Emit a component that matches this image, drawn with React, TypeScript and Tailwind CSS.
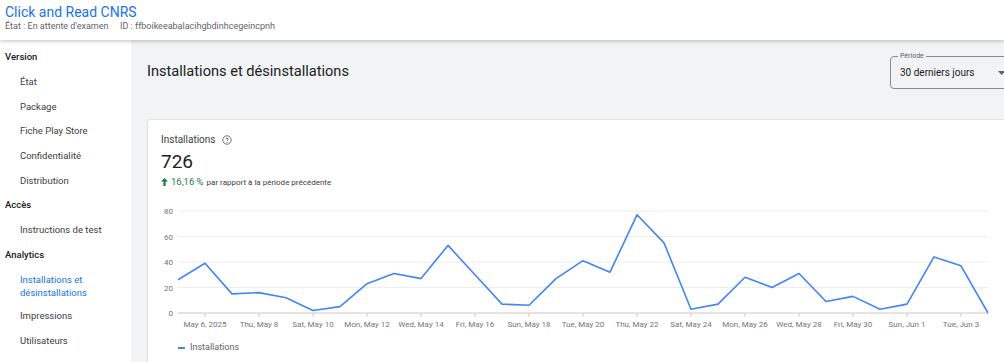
import React from "react";

const values = [26, 39, 15, 16, 12, 2, 5, 23, 31, 27, 53, 30, 7, 6, 27, 41, 32, 77, 55, 3, 7, 28, 20, 31, 9, 13, 3, 7, 44, 37, 0];
const xLabels = ["May 6, 2025", "Thu, May 8", "Sat, May 10", "Mon, May 12", "Wed, May 14", "Fri, May 16", "Sun, May 18", "Tue, May 20", "Thu, May 22", "Sat, May 24", "Mon, May 26", "Wed, May 28", "Fri, May 30", "Sun, Jun 1", "Tue, Jun 3"];

const OX = 148;
const OY = 200;
const x0 = 178 - OX;
const step = 27;
const yZero = 312 - OY;
const pxPerUnit = 1.275;

function Chart() {
  const pts = values.map((v, i) => `${x0 + i * step},${(yZero - v * pxPerUnit).toFixed(1)}`).join(" ");
  const grid = [0, 20, 40, 60, 80];
  const xEnd = 988 - OX;
  return (
    <svg width="860" height="130" className="block" style={{ fontFamily: "Roboto, 'Liberation Sans', sans-serif" }}>
      {grid.map((g) => {
        const y = yZero - g * pxPerUnit;
        return (
          <g key={g}>
            <line x1={x0} x2={xEnd} y1={y} y2={y} stroke={g === 0 ? "#c8c8c8" : "#ededed"} strokeWidth={1} />
            <text x={x0 - 5} y={y + 3} fontSize="8" fill="#757575" textAnchor="end">{g}</text>
          </g>
        );
      })}
      {xLabels.map((l, i) => {
        const x = x0 + (1 + i * 2) * step;
        return (
          <g key={l}>
            <line x1={x} x2={x} y1={yZero} y2={yZero + 4} stroke="#c8c8c8" />
            <text x={x} y={yZero + 14} fontSize="8" fill="#757575" textAnchor="middle">{l}</text>
          </g>
        );
      })}
      <polyline points={pts} fill="none" stroke="#4285f4" strokeWidth={1.6} strokeLinejoin="round" />
    </svg>
  );
}

const navItem = "pl-[20px] h-[24.7px] flex items-center text-[9.5px] text-[#3c4043]";
const navHead = "pl-[5px] h-[24.7px] flex items-center text-[9.5px] font-medium text-[#202124]";

export default function App() {
  return (
    <div className="w-[1004px] h-[362px] overflow-hidden flex flex-col bg-white" style={{ fontFamily: "Roboto, 'Liberation Sans', sans-serif" }}>
      <header className="h-[40px] shrink-0 bg-white relative z-10 shadow-[0_1px_4px_rgba(0,0,0,0.25)] pl-[5px] pt-[3px]">
        <div className="text-[14px] leading-[18px] text-[#1a73e8]">Click and Read CNRS</div>
        <div className="flex text-[9px] leading-[11px] text-[#5f6368]">
          <span className="w-[115px]">État : En attente d'examen</span>
          <span>ID : ffboikeeabalacihgbdinhcegeincpnh</span>
        </div>
      </header>
      <div className="flex flex-1 min-h-0">
        <nav className="w-[131px] shrink-0 bg-white pt-[5px]">
          <div className={navHead}>Version</div>
          <div className={navItem}>État</div>
          <div className={navItem}>Package</div>
          <div className={navItem}>Fiche Play Store</div>
          <div className={navItem}>Confidentialité</div>
          <div className={navItem}>Distribution</div>
          <div className={navHead}>Accès</div>
          <div className={navItem}>Instructions de test</div>
          <div className={navHead}>Analytics</div>
          <div className="pl-[20px] pt-[6px] pb-[5px] text-[9.5px] leading-[13px] text-[#1a73e8]">
            Installations et<br />désinstallations
          </div>
          <div className={navItem}>Impressions</div>
          <div className={navItem}>Utilisateurs</div>
        </nav>
        <main className="flex-1 min-w-0 overflow-hidden bg-[#f1f3f4]">
          <div className="w-[900px] pl-[16px] pt-[12px]">
            <div className="flex justify-between items-start h-[67px]">
              <h1 className="mt-[9px] text-[14.6px] leading-[20px] text-[#202124]">Installations et désinstallations</h1>
              <div className="relative mt-[4px] mr-[17px] w-[124px] h-[33px] border border-[#8a8a8a] rounded-[4px] flex items-center pl-[9px]">
                <span className="absolute -top-[6px] left-[7px] px-[2px] bg-[#f1f3f4] text-[7px] leading-[10px] text-[#5f6368]">Période</span>
                <span className="text-[10px] text-[#202124]">30 derniers jours</span>
                <svg className="absolute left-[107px] top-[14px]" width="7" height="4" viewBox="0 0 7 4"><path d="M0 0h7L3.5 4z" fill="#5f6368" /></svg>
              </div>
            </div>
            <div className="bg-white border border-[#e0e0e0] rounded-[3px] h-[260px]">
              <div className="pl-[13px] pt-[13px]">
                <div className="flex items-center gap-[6px] text-[10px] leading-[14px] text-[#3c4043]">
                  Installations
                  <svg width="10" height="10" viewBox="0 0 10 10">
                    <circle cx="5" cy="5" r="4.2" fill="none" stroke="#5f6368" strokeWidth="0.9" />
                    <path d="M3.6 4 C3.6 2.9 6.4 2.9 6.4 4 C6.4 4.9 5 4.9 5 6" fill="none" stroke="#5f6368" strokeWidth="0.9" />
                    <circle cx="5" cy="7.3" r="0.55" fill="#5f6368" />
                  </svg>
                </div>
                <div className="text-[19px] leading-[24px] text-[#202124] mt-[3px]">726</div>
                <div className="flex items-baseline gap-[3px] mt-[1px]">
                  <svg width="7" height="8" viewBox="0 0 7 8" className="self-center"><path d="M3.5 0L7 3.5H4.6V8H2.4V3.5H0z" fill="#188038" /></svg>
                  <span className="text-[9.5px] text-[#188038]">16,16 %</span>
                  <span className="text-[8px] text-[#3c4043]">par rapport à la période précédente</span>
                </div>
              </div>
              <div className="mt-[12px]">
                <Chart />
              </div>
              <div className="flex items-center pl-[30px] mt-[10px] gap-[5px]">
                <span className="w-[7px] h-[2px] bg-[#4285f4]" />
                <span className="text-[9px] text-[#5f6368]">Installations</span>
              </div>
            </div>
          </div>
        </main>
      </div>
    </div>
  );
}
